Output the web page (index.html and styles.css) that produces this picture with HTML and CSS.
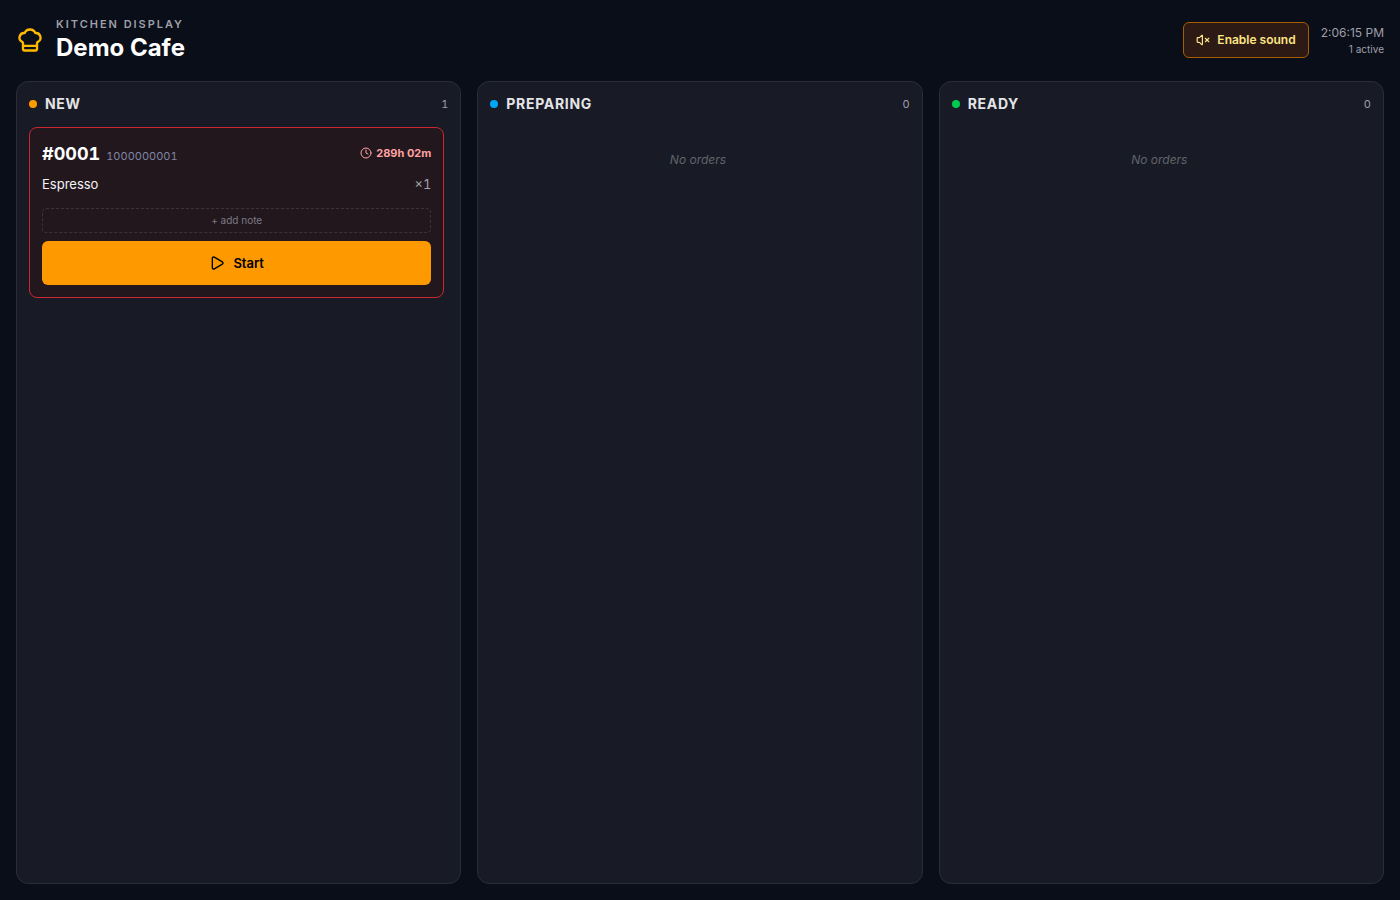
FILE: index.html
```html
<!DOCTYPE html>
<html lang="en">
<head>
    <meta charset="UTF-8">
    <meta name="viewport" content="width=device-width, initial-scale=1.0">
    <title>Kitchen Display - Demo Cafe</title>
    <link rel="stylesheet" href="styles.css">
</head>
<body>

    <header class="topbar">
        <div class="brand">
            <svg class="brand-icon" viewBox="0 0 24 24" aria-hidden="true">
                <path d="M17 21a1 1 0 0 0 1-1v-5.35c0-.457.316-.844.727-1.041a4 4 0 0 0-2.134-7.589 5 5 0 0 0-9.186 0 4 4 0 0 0-2.134 7.588c.411.198.727.585.727 1.041V20a1 1 0 0 0 1 1Z"/>
                <path d="M6 17h12"/>
            </svg>
            <div>
                <p class="eyebrow">Kitchen Display</p>
                <h1>Demo Cafe</h1>
            </div>
        </div>
        <div class="tools">
            <button class="sound-button" type="button">
                <svg class="icon-small" viewBox="0 0 24 24" aria-hidden="true">
                    <path d="M11 4.702a.705.705 0 0 0-1.203-.498L6.413 7.587A1.4 1.4 0 0 1 5.416 8H3a1 1 0 0 0-1 1v6a1 1 0 0 0 1 1h2.416a1.4 1.4 0 0 1 .997.413l3.383 3.384A.705.705 0 0 0 11 19.298z"/>
                    <path d="m22 9-6 6"/>
                    <path d="m16 9 6 6"/>
                </svg>
                Enable sound
            </button>
            <div class="status">
                <p class="clock">2:06:15 PM</p>
                <p class="active">1 active</p>
            </div>
        </div>
    </header>

    <main class="board">
        <section class="column">
            <div class="column-header">
                <span class="dot dot-new"></span>
                <h2>New</h2>
                <span class="count">1</span>
            </div>
            <div class="orders">
                <article class="order">
                    <div class="order-header">
                        <span class="order-number">#0001</span>
                        <span class="order-id">1000000001</span>
                        <span class="order-time">
                            <svg class="icon-clock" viewBox="0 0 24 24" aria-hidden="true">
                                <circle cx="12" cy="12" r="10"/>
                                <path d="M12 6v6l4 2"/>
                            </svg>
                            289h 02m
                        </span>
                    </div>
                    <ul class="items">
                        <li><span>Espresso</span><span class="qty">×1</span></li>
                    </ul>
                    <button class="note-button" type="button">+ add note</button>
                    <button class="start-button" type="button">
                        <svg class="icon-play" viewBox="0 0 24 24" aria-hidden="true">
                            <path d="M5 5a2 2 0 0 1 3.008-1.728l11.997 6.998a2 2 0 0 1 .003 3.458l-12 7A2 2 0 0 1 5 19z"/>
                        </svg>
                        Start
                    </button>
                </article>
            </div>
        </section>

        <section class="column">
            <div class="column-header">
                <span class="dot dot-preparing"></span>
                <h2>Preparing</h2>
                <span class="count">0</span>
            </div>
            <div class="orders">
                <p class="empty">No orders</p>
            </div>
        </section>

        <section class="column">
            <div class="column-header">
                <span class="dot dot-ready"></span>
                <h2>Ready</h2>
                <span class="count">0</span>
            </div>
            <div class="orders">
                <p class="empty">No orders</p>
            </div>
        </section>
    </main>

</body>
</html>
```
FILE: styles.css
```css
* {
    box-sizing: border-box;
}
body {
    margin: 0;
    padding: 16px;
    min-height: 100vh;
    display: flex;
    flex-direction: column;
    gap: 17px;
    background-color: #0a0e18;
    color: #f4f4f5;
    font-family: Inter, sans-serif;
    font-size: 13px;
    line-height: 20px;
}
h1, h2, p, ul {
    margin: 0;
    padding: 0;
}
button {
    font-family: inherit;
    cursor: pointer;
}
svg {
    fill: none;
    stroke: currentColor;
    stroke-width: 2;
    stroke-linecap: round;
    stroke-linejoin: round;
    flex-shrink: 0;
}

/* Top bar */
.topbar,
.brand,
.tools {
    display: flex;
    align-items: center;
    gap: 12px;
}
.topbar {
    justify-content: space-between;
}
.brand-icon {
    width: 28px;
    height: 28px;
    color: #ffb900;
}
.eyebrow {
    font-size: 11px;
    line-height: 16px;
    font-weight: 600;
    letter-spacing: 0.18em;
    text-transform: uppercase;
    color: #9f9fa9;
}
h1 {
    font-size: 24px;
    line-height: 32px;
    font-weight: 700;
    color: #fff;
}
.sound-button {
    display: flex;
    align-items: center;
    gap: 7px;
    height: 36px;
    padding: 0 12px;
    border: 1px solid #a65f00;
    border-radius: 6px;
    background-color: #2d1a15;
    color: #fee685;
    font-size: 12px;
    line-height: 18px;
    font-weight: 600;
}
.icon-small {
    width: 14px;
    height: 14px;
}
.status {
    text-align: right;
    color: #9f9fa9;
}
.clock {
    font-size: 12px;
    line-height: 18px;
}
.active {
    font-size: 10px;
    line-height: 15px;
}

/* Board */
.board {
    flex: 1;
    display: grid;
    grid-template-columns: repeat(3, 1fr);
    gap: 16px;
}
.column {
    padding: 12px;
    border: 1px solid #2a2d37;
    border-radius: 12px;
    background-color: #181b25;
}
.column-header {
    display: flex;
    align-items: center;
    gap: 8px;
    margin-bottom: 13px;
}
h2 {
    font-size: 14px;
    line-height: 20px;
    font-weight: 700;
    letter-spacing: 0.05em;
    text-transform: uppercase;
    color: #e4e4e7;
}
.dot {
    width: 8px;
    height: 8px;
    border-radius: 50%;
}
.dot-new {
    background-color: #fe9a00;
}
.dot-preparing {
    background-color: #00a6f4;
}
.dot-ready {
    background-color: #00c950;
}
.count {
    margin-left: auto;
    font-size: 11px;
    font-variant-numeric: tabular-nums;
    color: #9f9fa9;
}
.empty {
    padding: 24px 0;
    text-align: center;
    font-size: 12px;
    font-style: italic;
    line-height: 18px;
    color: #62646c;
}

/* Order card */
.orders {
    padding-right: 4px;
}
.order {
    padding: 12px;
    border: 1px solid #cb2730;
    border-radius: 8px;
    background-color: #23171e;
}
.order-header {
    display: flex;
    align-items: baseline;
    gap: 6px;
    margin-bottom: 6px;
}
.order-number {
    font-size: 18px;
    line-height: 28px;
    font-weight: 700;
    font-variant-numeric: tabular-nums;
    color: #fff;
}
.order-id {
    font-size: 11px;
    font-variant-numeric: tabular-nums;
    color: #7f86a3;
}
.order-time {
    display: flex;
    align-items: center;
    gap: 4px;
    margin-left: auto;
    align-self: flex-start;
    line-height: 26px;
    font-size: 11px;
    font-weight: 700;
    color: #ffa2a2;
}
.icon-clock {
    width: 12px;
    height: 12px;
}
.items {
    list-style: none;
    margin-bottom: 14px;
}
.items li {
    display: flex;
    justify-content: space-between;
}
.qty {
    font-variant-numeric: tabular-nums;
    color: #9f9fa9;
}
.note-button {
    display: block;
    width: 100%;
    margin-bottom: 8px;
    padding: 4px 0;
    border: 1px dashed #3c3239;
    border-radius: 4px;
    background: none;
    color: #7c7a83;
    font-size: 10px;
    line-height: 15px;
}
.start-button {
    display: flex;
    align-items: center;
    justify-content: center;
    gap: 8px;
    width: 100%;
    height: 44px;
    border: none;
    border-radius: 6px;
    background-color: #fe9a00;
    color: #000;
    font-size: 13px;
    line-height: 20px;
    font-weight: 600;
}
.icon-play {
    width: 16px;
    height: 16px;
}
```
